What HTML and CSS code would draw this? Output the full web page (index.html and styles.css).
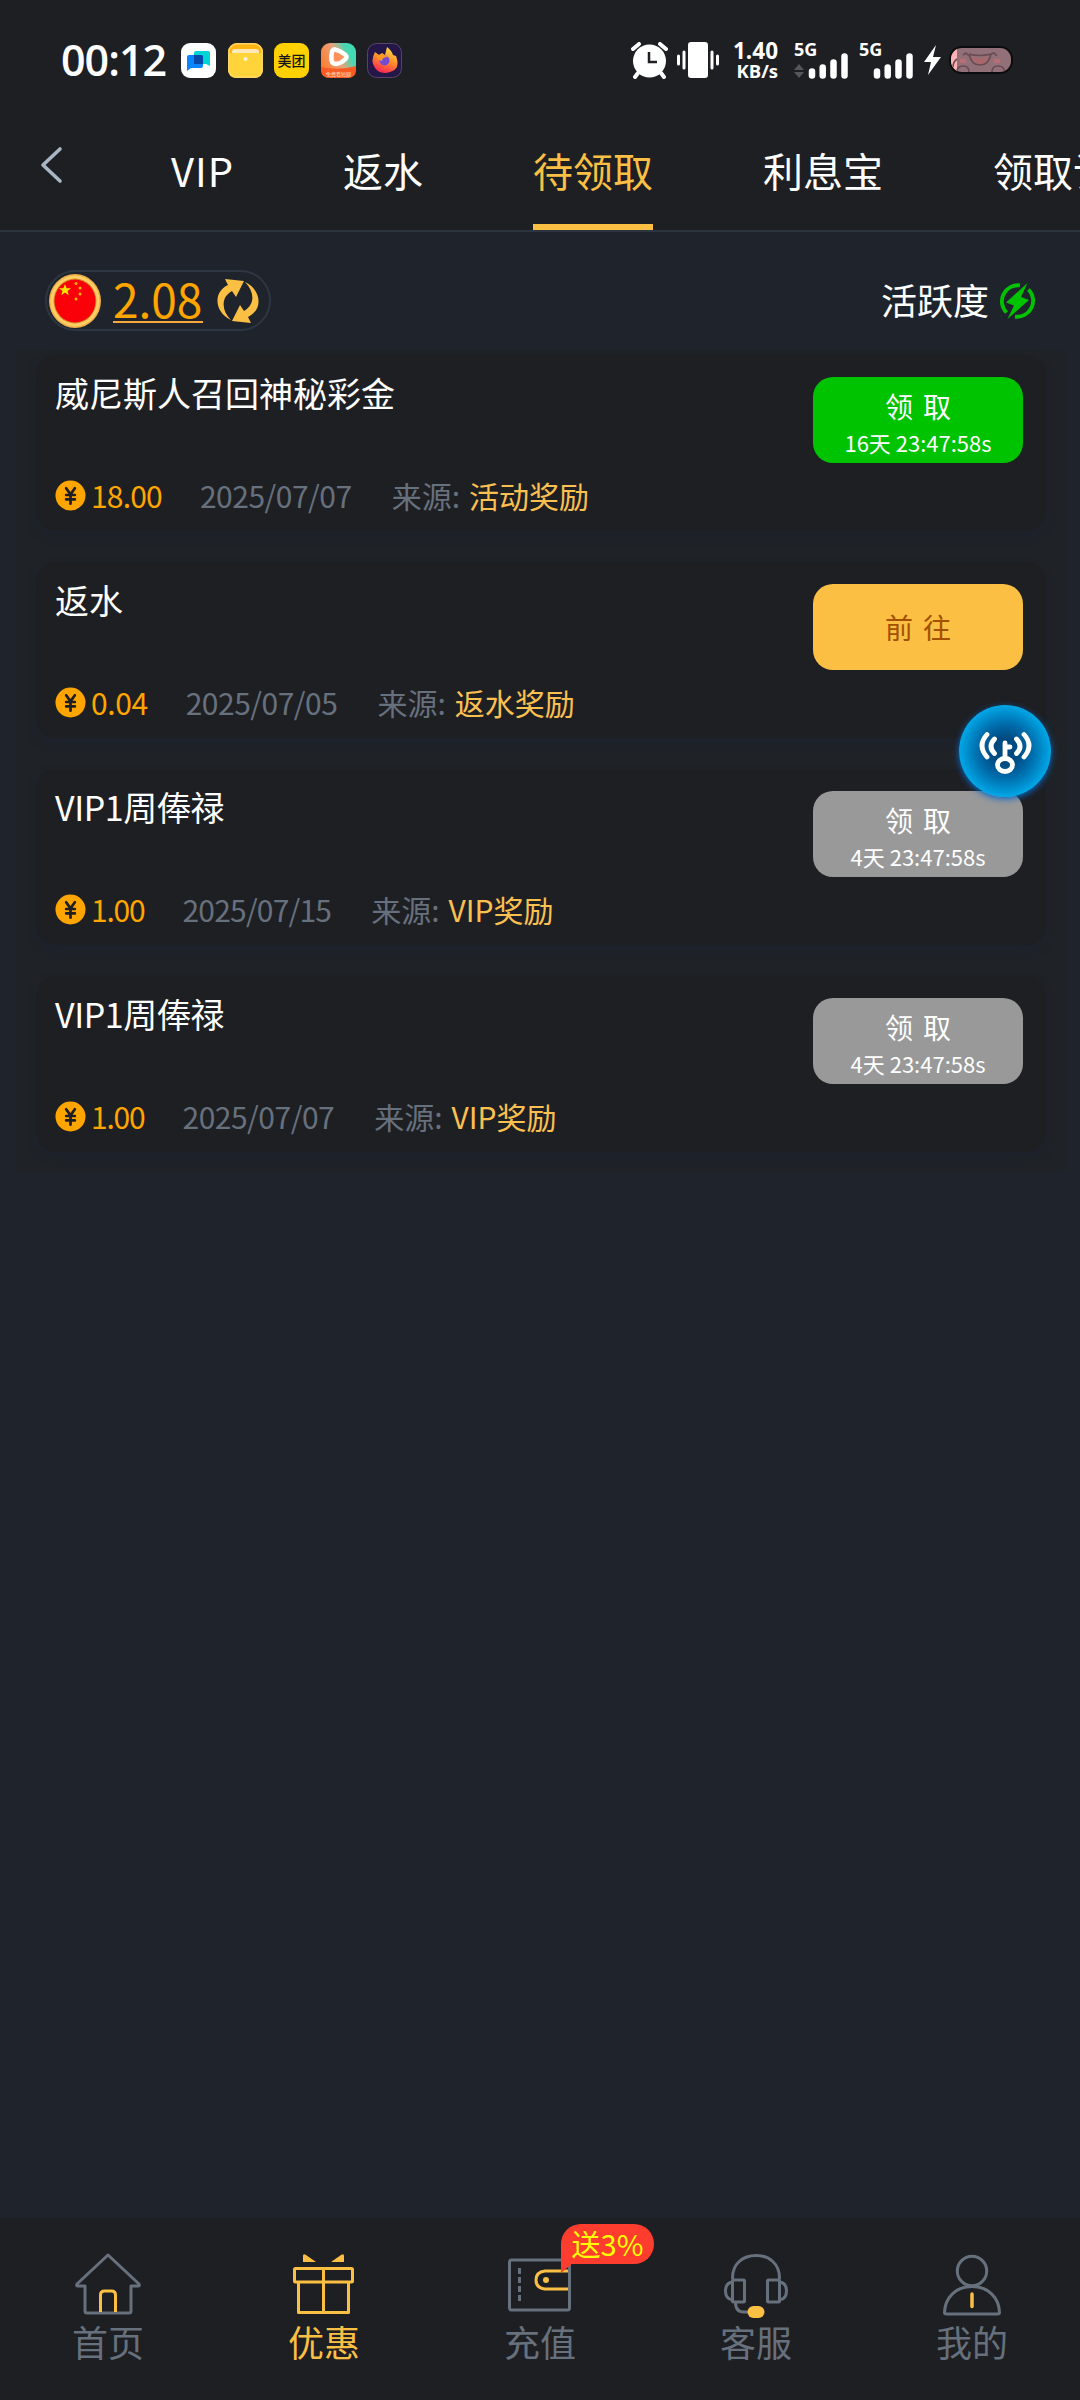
FILE: index.html
```html
<!DOCTYPE html>
<html lang="zh-CN">
<head>
<meta charset="utf-8">
<title>待领取</title>
<link rel="stylesheet" href="styles.css">
</head>
<body>
<svg class="defs" aria-hidden="true">
  <symbol id="coin" viewBox="0 0 32 32">
    <circle cx="16" cy="16" r="15.500" fill="#ffa500"/>
    <path d="M11.500 8.500l4.500 6.300 4.500-6.300M16 15v9.500M11.500 15.500h9M11.500 20h9" fill="none" stroke="#1e1f23" stroke-width="2.800" stroke-linecap="round"/>
  </symbol>
  <symbol id="signal" viewBox="0 0 42 28">
    <path d="M4 20.500v4M14.700 16.500v8M25.500 11.500v13M36.500 5.500v19" fill="none" stroke="#fff" stroke-width="6.500" stroke-linecap="round"/>
  </symbol>
</svg>
<div class="screen">
  <header class="status">
    <div class="status-left">
      <span class="clock">00:12</span>
      <svg class="app" viewBox="0 0 35 35"><rect width="35" height="35" rx="9" fill="#fff"/><path d="M15 8h12q2 0 2 2v13l-4-2H13V10q0-2 2-2z" fill="#00d5d5"/><path d="M8 12h12q2 0 2 2v9q0 2-2 2H10l-4 3V14q0-2 2-2z" fill="#0a84ff"/><path d="M13 12h7q2 0 2 2v7h-9z" fill="#0848a8"/></svg>
      <svg class="app" viewBox="0 0 35 35"><rect width="35" height="35" rx="9" fill="#ffb413"/><rect x="4" y="6" width="27" height="8" rx="3" fill="#ffe9bb"/><path d="M0 10h35v16q0 9-9 9H9q-9 0-9-9z" fill="#ffd43b"/><rect x=".7" y=".7" width="33.600" height="33.600" rx="8.500" fill="none" stroke="#ffd568" stroke-width="1.400"/><circle cx="17.500" cy="16" r="2" fill="#fff6d8"/></svg>
      <span class="app app-text">美团</span>
      <svg class="app" viewBox="0 0 35 35"><defs><linearGradient id="play" x1="0" y1=".7" x2="1" y2=".2"><stop offset="0" stop-color="#ff7928"/><stop offset=".5" stop-color="#e9a27c"/><stop offset=".8" stop-color="#43d9b3"/></linearGradient></defs><rect width="35" height="35" rx="9" fill="url(#play)"/><path d="M0 24q18 4 35-1v4q0 8-9 8H9q-9 0-9-8z" fill="#fb5b22"/><path d="M14 6.500q5 1 10 5 3 2.500 0 5-4 4-9 4.500-4 0-4.500-4Q10 13 11 9q.5-3 3-2.500z" fill="#ff925b" stroke="#fff" stroke-width="4.500" stroke-linejoin="round"/><text x="17.500" y="32.500" text-anchor="middle" class="app-caption">免费看短剧</text></svg>
      <svg class="app" viewBox="0 0 35 35"><defs><linearGradient id="fox" x1=".8" y1="0" x2=".4" y2="1"><stop offset="0" stop-color="#ffe34a"/><stop offset=".5" stop-color="#ff912a"/><stop offset="1" stop-color="#ff2856"/></linearGradient></defs><rect x=".5" y=".5" width="34" height="34" rx="9" fill="#241747" stroke="#58436d"/><path d="M8 9l4 3 3-2 3 2 2-8q5 4 6 8l3 1q5 13-6 16-10 3-15-4-5-7 0-16z" fill="url(#fox)"/><circle cx="17.500" cy="17.500" r="5" fill="#744cd3"/><path d="M10 12q7-1 11 2-6 0-6 4-5-1-5-6" fill="#ff9a24"/></svg>
    </div>
    <div class="status-right">
      <svg class="alarm" viewBox="0 0 38 37"><circle cx="18.500" cy="19" r="16.500" fill="#fff"/><path d="M2 7l6-5M29 2l6 5" stroke="#fff" stroke-width="4" stroke-linecap="round"/><path d="M7 31l-3 4M30 31l3 4" stroke="#fff" stroke-width="4" stroke-linecap="round"/><path d="M18 10v10h8" fill="none" stroke="#1e1f23" stroke-width="2.500"/></svg>
      <svg class="vibrate" viewBox="0 0 42 36"><rect x="11" width="20" height="36" rx="3" fill="#fff"/><path d="M1.500 14v8M7 10v16M35 10v16M40.500 14v8" stroke="#fff" stroke-width="3" stroke-linecap="round"/></svg>
      <div class="speed"><span>1.40</span><span class="unit">KB/s</span></div>
      <div class="cell"><span>5G</span><svg class="bars" viewBox="0 0 42 28"><use href="#signal"/></svg><svg class="traffic" viewBox="0 0 10 14"><path d="M0 6l5-6 5 6zM0 8h10l-5 6z" fill="#55565a"/></svg></div>
      <div class="cell"><span>5G</span><svg class="bars" viewBox="0 0 42 28"><use href="#signal"/></svg></div>
      <svg class="bolt" viewBox="0 0 17 30"><path d="M12 0L0 17h7L4 30 17 12H9z" fill="#fff"/></svg>
      <svg class="battery" viewBox="0 0 64 28"><defs><clipPath id="cell"><rect x="2" y="2" width="60" height="24" rx="11"/></clipPath></defs><rect width="64" height="28" rx="13" fill="#0c0c0e"/><g clip-path="url(#cell)"><path fill="#927078" d="M0 0h64v28H0z"/><path fill="#ffb2b6" d="M0 0h8v28H0z"/><g fill="none" stroke="#684b53" stroke-width="1.600"><path d="M20 8q10 3 22 0-2 11-11 11T20 8M14 9l3-2 3 3M42 8l3-1 3 3M8 13q-4 3-4 8M8 26q0-6 6-6t6 6M43 26q0-6 6-6t7 6"/></g><path d="M22 11q10 2 17 0-2 7-8 7t-9-7" fill="#a9666b"/><path d="M11 15h6M45 15h6" stroke="#b86e74" stroke-width="4"/></g></svg>
    </div>
  </header>

  <nav class="tabs">
    <svg class="back" viewBox="0 0 24 38"><path d="M20 3L3 19l17 16" fill="none" stroke="#a8b6c5" stroke-width="3.600" stroke-linecap="round" stroke-linejoin="round"/></svg>
    <div class="tab-strip">
      <a class="tab tab-latin">VIP</a><a class="tab">返水</a><a class="tab active">待领取</a><a class="tab">利息宝</a><a class="tab">领取记录</a>
    </div>
  </nav>

  <section class="summary">
    <div class="balance">
      <svg class="flag" viewBox="0 0 52 54"><ellipse cx="26" cy="27" rx="26" ry="27" fill="#eeb048"/><ellipse cx="26" cy="27" rx="24.500" ry="25.500" fill="#ffcf66"/><ellipse cx="26" cy="27" rx="21.500" ry="22.500" fill="#d78c28"/><ellipse cx="26" cy="27" rx="20.500" ry="21.500" fill="#fa0008"/><path d="M16 10l1.600 4.200h4.400l-3.500 2.700 1.300 4.300-3.800-2.600-3.800 2.600 1.300-4.300-3.500-2.700h4.400z" fill="#ffe600"/><g fill="#ffb300"><circle cx="27" cy="9.500" r="1.500"/><circle cx="31" cy="14" r="1.500"/><circle cx="31" cy="20" r="1.500"/><circle cx="27" cy="25" r="1.500"/></g></svg>
      <span class="balance-value">2.08</span>
      <svg class="refresh" viewBox="0 0 42 44"><g fill="#fbc043"><path d="M8 0l19 2-8 16-4-6C4 18 4 31 14 41-3 33-4 13 11 6z"/><path d="M34 44l-19-2 8-16 4 6C38 26 38 13 28 3c17 8 18 28 3 35z"/></g></svg>
    </div>
    <div class="activity"><span>活跃度</span>
      <svg class="energy" viewBox="0 0 37 36"><path d="M21 2.400A16 16 0 0 0 7.500 29.500M16 33.600A16 16 0 0 0 29.500 6.500" fill="none" stroke="#00c300" stroke-width="3.800"/><path d="M28.500 0L7 19.500l8 3L8.500 36 30 17l-8-3z" fill="#00c300"/></svg>
    </div>
  </section>

  <main class="rewards">
    <article class="card">
      <div class="info"><h2>威尼斯人召回神秘彩金</h2><div class="meta"><svg class="coin"><use href="#coin"/></svg><span class="amount">18.00</span><span class="date">2025/07/07</span><span class="source">来源:</span><span class="kind">活动奖励</span></div></div>
      <button class="claim ready"><span class="action">领取</span><span class="left">16天 23:47:58s</span></button>
    </article>
    <article class="card">
      <div class="info"><h2>返水</h2><div class="meta"><svg class="coin"><use href="#coin"/></svg><span class="amount wide">0.04</span><span class="date">2025/07/05</span><span class="source">来源:</span><span class="kind">返水奖励</span></div></div>
      <button class="claim go"><span class="action">前往</span></button>
    </article>
    <article class="card">
      <div class="info"><h2 class="mixed">VIP1周俸禄</h2><div class="meta"><svg class="coin"><use href="#coin"/></svg><span class="amount short">1.00</span><span class="date narrow">2025/07/15</span><span class="source">来源:</span><span class="kind">VIP奖励</span></div></div>
      <button class="claim locked"><span class="action">领取</span><span class="left">4天 23:47:58s</span></button>
    </article>
    <article class="card">
      <div class="info"><h2 class="mixed">VIP1周俸禄</h2><div class="meta"><svg class="coin"><use href="#coin"/></svg><span class="amount short">1.00</span><span class="date">2025/07/07</span><span class="source">来源:</span><span class="kind">VIP奖励</span></div></div>
      <button class="claim locked"><span class="action">领取</span><span class="left">4天 23:47:58s</span></button>
    </article>
  </main>

  <div class="floating">
    <svg viewBox="0 0 92 92"><g fill="none" stroke="#fff" stroke-width="4.800" stroke-linecap="round"><path d="M28 29.500q-10 11 0 22.500M35.500 34q-7 7.500 0 14.500M65 29.500q10 11 0 22.500M57.500 34q7 7.500 0 14.500"/><ellipse cx="46" cy="60" rx="7.500" ry="6.500"/><path d="M46 53V38M46 42h5"/></g></svg>
  </div>

  <footer class="dock">
    <a class="dock-item"><svg viewBox="0 0 72 66"><path d="M36 4L5 33q-1 2 1 2h7v25q0 2 2 2h42q2 0 2-2V35h7q2 0 1-2z" fill="none" stroke="#67707d" stroke-width="3" stroke-linejoin="round"/><path d="M28.500 61V44q0-4 4-4h7q4 0 4 4v17" fill="none" stroke="#fbc043" stroke-width="3"/></svg><span>首页</span></a>
    <a class="dock-item selected"><svg viewBox="0 0 72 66"><g fill="none" stroke="#fbc043" stroke-width="3" stroke-linejoin="round"><rect x="6.500" y="17.500" width="58" height="13.500" rx="1"/><path d="M10.500 31v30.500h50V31M35.500 17v44"/></g><path d="M15 10V5q0-3 3-1l10 7H15zM56 10V5q0-3-3-1l-10 7h13z" fill="#fbc043"/></svg><span>优惠</span></a>
    <a class="dock-item"><svg viewBox="0 0 72 66"><rect x="5.500" y="9" width="60" height="50" rx="2" fill="none" stroke="#67707d" stroke-width="3"/><path d="M15.500 17v34" fill="none" stroke="#67707d" stroke-width="3" stroke-dasharray="6 3"/><path d="M64 20H41q-9 1-9 9t9 9h23" fill="none" stroke="#fbc043" stroke-width="3"/><circle cx="42" cy="29" r="3" fill="#fbc043"/></svg><span>充值</span>
      <div class="badge">送3%</div></a>
    <a class="dock-item"><svg viewBox="0 0 72 66"><g fill="none" stroke="#67707d" stroke-width="3"><path d="M12.500 28v-1c0-14 10-22.500 23.500-22.500S59.500 13 59.500 27v1"/><rect x="12.500" y="29" width="12" height="22" rx="1"/><rect x="47.500" y="29" width="12" height="22" rx="1"/><path d="M12.500 31q-7 1-7 9t7 9M59.500 31q7 1 7 9t-7 9M15.500 51q0 10 8 10h6"/></g><rect x="27.500" y="55" width="17" height="12" rx="6" fill="#fbc043"/></svg><span>客服</span></a>
    <a class="dock-item"><svg viewBox="0 0 72 66"><g fill="none" stroke="#67707d" stroke-width="3"><circle cx="36" cy="20" r="14.700"/><path d="M36 35.500c-16 0-27 11-27.500 26q0 1.500 2 1.500h51q2 0 2-1.500C63 46.500 52 35.500 36 35.500z"/></g><path d="M36 43v12.500" stroke="#fbc043" stroke-width="3.500" stroke-linecap="round"/></svg><span>我的</span></a>
  </footer>
</div>
</body>
</html>
```
FILE: styles.css
```css
* { box-sizing: border-box; }
body { margin: 0; background: #1f242c; color: #fff; font-family: "Noto Sans CJK SC", sans-serif; }
.defs { position: absolute; width: 0; height: 0; }
.screen { position: relative; width: 1080px; height: 2400px; overflow: hidden; display: flex; flex-direction: column; }

.status { height: 120px; flex: none; display: flex; justify-content: space-between; padding: 0 67px 0 61px; background: #1e1f23; }
.status-left, .status-right { display: flex; height: 120px; align-items: center; }
.status-left { gap: 11.5px; }
.clock { width: 108.5px; font: 600 43px/60px "Open Sans", sans-serif; letter-spacing: -1px; white-space: nowrap; }
.app { width: 35px; height: 35px; flex: none; }
.app-text { display: flex; align-items: center; justify-content: center; border-radius: 9px; background: #ffd100; color: #161616; font-size: 14px; font-weight: 500; line-height: 35px; }
.app-caption { font-size: 5px; fill: #ffe0c8; }
.alarm { width: 38px; height: 37px; margin-right: 8px; }
.vibrate { width: 42px; height: 36px; margin-right: 13px; }
.speed { width: 46px; margin-right: 16px; padding-bottom: 1px; display: flex; flex-direction: column; align-items: flex-end; font: 700 22.5px/21px "Open Sans", sans-serif; white-space: nowrap; }
.speed .unit { font-size: 18.5px; line-height: 19px; }
.cell { position: relative; width: 55px; height: 38px; margin-right: 10px; display: flex; align-items: flex-start; font: 700 18px/16px "Open Sans", sans-serif; }
.bars { position: absolute; left: 13.5px; bottom: 0; width: 42px; height: 28px; }
.traffic { position: absolute; left: 0; bottom: 1px; width: 10px; height: 14px; }
.bolt { width: 17px; height: 30px; margin-right: 8px; }
.battery { width: 64px; height: 28px; }

.tabs { height: 112px; flex: none; display: flex; padding-left: 40px; background: #1e1f23; border-bottom: 2px solid #2c3440; }
.back { width: 24px; height: 38px; margin: 26px 107px 0 0; flex: none; }
.tab-strip { display: flex; gap: 110px; white-space: nowrap; }
.tab { height: 110px; font-size: 40px; line-height: 100px; border-bottom: 6px solid transparent; }
.tab-latin { width: 62px; letter-spacing: 1px; }
.tab.active { color: #fbc043; border-color: #fbc043; }

.summary { height: 118px; flex: none; display: flex; justify-content: space-between; align-items: flex-start; padding: 38px 44px 0 45px; }
.balance { width: 226px; height: 61px; display: flex; align-items: center; padding-left: 2px; border: 2px solid #2e3643; border-radius: 31px; }
.flag { width: 52px; height: 54px; margin-right: 12px; }
.balance-value { width: 90px; height: 45px; margin-right: 14px; border-bottom: 2px solid #f5a93a; font-size: 46px; line-height: 40px; color: #ffa500; }
.refresh { width: 42px; height: 44px; }
.activity { height: 62px; display: flex; align-items: center; gap: 10px; font-size: 36px; line-height: 62px; }
.activity span { height: 64px; line-height: 60px; }
.energy { width: 37px; height: 36px; }

.rewards { width: 1050px; height: 822px; flex: none; margin-left: 16px; padding: 5px 20px; display: flex; flex-direction: column; gap: 31px; background: #1f2328; }
.card { height: 176px; display: flex; justify-content: space-between; padding: 22px 23px 0 19px; border-radius: 20px; background: #1e1f23; box-shadow: 0 5px 8px #1d222c; }
.info { display: flex; flex-direction: column; }
.info h2 { margin: -9px 0 55px; font-size: 34px; line-height: 50px; font-weight: 400; }
.info .mixed { letter-spacing: -.4px; }
.meta { display: flex; align-items: center; height: 45px; font-size: 30px; line-height: 45px; white-space: nowrap; }
.coin { width: 31px; height: 31px; margin-right: 5px; }
.amount { color: #ffa500; letter-spacing: -.8px; margin-right: 38px; }
.amount.wide { letter-spacing: -.4px; }
.amount.short { letter-spacing: -1.2px; }
.date { color: #67707d; letter-spacing: -.5px; margin-right: 40px; }
.date.narrow { letter-spacing: -.8px; }
.source { color: #67707d; margin-right: 9px; }
.kind { color: #fbc04f; }
.claim { width: 210px; height: 86px; padding: 0; border: 0; border-radius: 20px; display: flex; flex-direction: column; align-items: center; justify-content: center; color: #fff; font-family: inherit; }
.action { font-size: 28px; line-height: 40px; letter-spacing: 10px; margin-right: -10px; }
.left { height: 30px; font-size: 22px; line-height: 32px; }
.ready .action, .locked .action { padding-top: 1px; }
.ready { background: #00c300; }
.go { background: #fbc043; color: #a35100; }
.locked { background: #999; }

.floating { position: absolute; left: 959px; top: 705px; width: 92px; height: 92px; border-radius: 50%; background: radial-gradient(circle closest-side, #004a80 28%, #006dac 60%, #00a5e5 98%); box-shadow: 0 2px 6px #0868ca; }

.dock { height: 182px; flex: none; margin-top: auto; display: grid; grid-template-columns: repeat(5, 1fr); background: #1e1f23; }
.dock-item { position: relative; display: flex; flex-direction: column; align-items: center; padding-top: 33px; color: #67707d; font-size: 36px; line-height: 48px; }
.dock-item svg { width: 72px; height: 66px; overflow: visible; }
.dock-item.selected { color: #fbc043; }
.badge { position: absolute; left: 129px; top: 6px; width: 93px; height: 40px; border-radius: 20px 20px 20px 0; background: #ff3d2e; color: #ff0; font-size: 29px; line-height: 39px; text-align: center; }
.badge::after { content: ""; position: absolute; left: 0; top: 39px; border-top: 10px solid #ff3d2e; border-right: 12px solid transparent; }
```
